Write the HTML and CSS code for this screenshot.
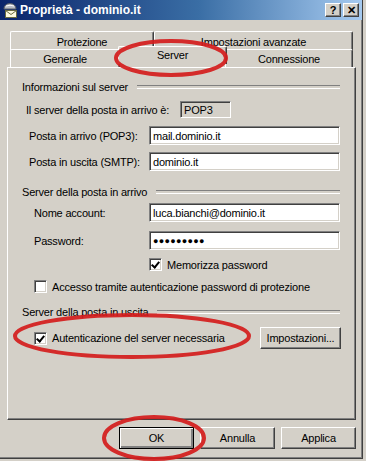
FILE: index.html
```html
<!DOCTYPE html>
<html lang="it">
<head>
  <meta charset="UTF-8" />
  <title>Proprietà - dominio.it</title>
  <link rel="stylesheet" href="styles.css">
</head>
<body>

  <div class="window">

    <!-- Title bar -->
    <div class="titlebar">
      <svg class="app-icon" width="16" height="16" viewBox="0 0 16 16">
        <path d="M2 7 Q2 2 8 1.5 Q14 2 14 7 Z" fill="#b8bcc4" stroke="#5a5e66" stroke-width="1"/>
        <path d="M4 4 Q8 2.5 12 4" fill="none" stroke="#fff" stroke-width="1"/>
        <rect x="3.5" y="8.5" width="11" height="7" fill="#fffbe0" stroke="#6b6b40" stroke-width="1"/>
        <path d="M3.5 8.5 L9 12.5 L14.5 8.5" fill="none" stroke="#6b6b40" stroke-width="1"/>
      </svg>
      <span class="title">Proprietà - dominio.it</span>
      <div class="title-buttons">
        <span class="tbtn">?</span>
        <span class="tbtn">✕</span>
      </div>
    </div>

    <!-- Tabs -->
    <div class="tabs">
      <div class="tab-row back">
        <div class="tab tab-prot">Protezione</div>
        <div class="tab tab-adv">Impostazioni avanzate</div>
      </div>
      <div class="tab-row front">
        <div class="tab tab-gen">Generale</div>
        <div class="tab tab-srv active">Server</div>
        <div class="tab tab-con">Connessione</div>
      </div>
    </div>

    <!-- Panel -->
    <div class="panel">
      <div class="group-title first"><span>Informazioni sul server</span></div>

      <div class="row row-type">
        <label class="lbl pad-27">Il server della posta in arrivo è:</label>
        <div class="readonly">POP3</div>
      </div>

      <div class="row row-in1">
        <label class="lbl pad-30">Posta in arrivo (POP3):</label>
        <div class="field">mail.dominio.it</div>
      </div>

      <div class="row row-in2">
        <label class="lbl pad-30">Posta in uscita (SMTP):</label>
        <div class="field">dominio.it</div>
      </div>

      <div class="group-title second"><span>Server della posta in arrivo</span></div>

      <div class="row row-acc">
        <label class="lbl pad-35">Nome account:</label>
        <div class="field">luca.bianchi@dominio.it</div>
      </div>

      <div class="row row-pwd">
        <label class="lbl pad-35">Password:</label>
        <div class="field dots">●●●●●●●●●</div>
      </div>

      <div class="row row-mem">
        <span class="check checked"></span>
        <span class="check-text">Memorizza password</span>
      </div>

      <div class="row row-spa">
        <span class="check"></span>
        <span class="check-text">Accesso tramite autenticazione password di protezione</span>
      </div>

      <div class="group-title third"><span>Server della posta in uscita</span></div>

      <div class="row row-auth">
        <span class="check checked"></span>
        <span class="check-text">Autenticazione del server necessaria</span>
        <span class="btn btn-settings">Impostazioni...</span>
      </div>
    </div>

    <!-- Dialog buttons -->
    <div class="actions">
      <span class="btn btn-main default">OK</span>
      <span class="btn btn-main">Annulla</span>
      <span class="btn btn-main">Applica</span>
    </div>

    <!-- Red marker rings drawn over the dialog -->
    <svg class="marks" width="366" height="461" viewBox="0 0 366 461">
      <ellipse cx="171" cy="58" rx="55" ry="17" />
      <ellipse cx="132" cy="336" rx="117" ry="21" />
      <ellipse cx="154" cy="438" rx="50" ry="21" />
    </svg>
  </div>

</body>
</html>
```

FILE: styles.css
```css
* {
  box-sizing: border-box;
  margin: 0;
  padding: 0;
}

body {
  width: 366px;
  height: 461px;
  background: #d4d0c8;
  font-family: 'Liberation Sans', Arial, sans-serif;
  font-size: 11px;
  letter-spacing: -0.2px;
  color: #000;
  overflow: hidden;
}

.window {
  position: relative;
  width: 363px;
  height: 459px;
  background: #d4d0c8;
  border-right: 1px solid #404040;
  border-bottom: 1px solid #404040;
  box-shadow: inset -1px -1px 0 #808080;
}

/* Title bar */
.titlebar {
  display: flex;
  align-items: center;
  height: 20px;
  width: 362px;
  padding-left: 2px;
  background: linear-gradient(to right, #0a246a, #3a6ea5 55%, #a6caf0);
}

.app-icon {
  flex: none;
}

.title {
  margin-left: 2px;
  color: #fff;
  font-weight: bold;
  font-size: 12px;
  letter-spacing: 0;
}

.title-buttons {
  display: flex;
  gap: 2px;
  margin-left: auto;
  margin-right: 3px;
}

.tbtn {
  display: flex;
  align-items: center;
  justify-content: center;
  width: 16px;
  height: 14px;
  background: #d4d0c8;
  border-top: 1px solid #fff;
  border-left: 1px solid #fff;
  border-right: 1px solid #404040;
  border-bottom: 1px solid #404040;
  box-shadow: inset -1px -1px 0 #808080;
  font-weight: bold;
  font-size: 11px;
  line-height: 1;
}

/* Tabs */
.tabs {
  margin-top: 11px;
  padding-left: 10px;
}

.tab-row {
  display: flex;
  height: 18px;
}

.tab {
  display: flex;
  align-items: center;
  justify-content: center;
  height: 19px;
  border-top: 1px solid #fff;
  border-left: 1px solid #fff;
  border-right: 1px solid #404040;
  box-shadow: inset -1px 0 0 #808080;
  border-radius: 2px 2px 0 0;
  background: #d4d0c8;
  padding-top: 1px;
}

.tab-prot { width: 144px; }
.tab-adv { width: 199px; }
.tab-gen { width: 110px; }
.tab-srv { width: 105px; }
.tab-con { width: 128px; }

.tab-row.front .tab {
  height: 18px;
}

.tab.active {
  position: relative;
  z-index: 2;
  height: 22px;
  margin: -3px -2px 0;
  width: 109px;
  padding-bottom: 3px;
}

/* Panel */
.panel {
  position: relative;
  z-index: 1;
  margin-left: 7px;
  width: 349px;
  height: 353px;
  border-top: 1px solid #fff;
  border-left: 1px solid #fff;
  border-right: 1px solid #404040;
  border-bottom: 1px solid #404040;
  box-shadow: inset -1px -1px 0 #808080;
  padding-left: 14px;
}

.group-title {
  display: flex;
  align-items: center;
  height: 14px;
  padding-right: 15px;
}

.group-title::after {
  content: "";
  flex: 1;
  height: 2px;
  margin-left: 9px;
  border-top: 1px solid #808080;
  border-bottom: 1px solid #fff;
}

.group-title.first { margin-top: 12px; }
.group-title.second { margin-top: 14px; }
.group-title.third { margin-top: 12px; }

.row {
  display: flex;
  align-items: center;
}

.lbl {
  width: 127px;
  flex: none;
  white-space: nowrap;
}

.pad-27 { padding-left: 4px; }
.pad-30 { padding-left: 7px; }
.pad-35 { padding-left: 12px; }

.field,
.readonly {
  display: flex;
  align-items: center;
  height: 19px;
  width: 191px;
  padding-left: 3px;
  background: #fff;
  border-top: 1px solid #808080;
  border-left: 1px solid #808080;
  border-right: 1px solid #fff;
  border-bottom: 1px solid #fff;
  box-shadow: inset 1px 1px 0 #404040, inset -1px -1px 0 #d4d0c8;
}

.readonly {
  width: 51px;
  height: 17px;
  margin-left: 31px;
  background: #d4d0c8;
}

.dots {
  font-size: 9px;
  letter-spacing: 0.3px;
}

.row-type { margin-top: 7px; }
.row-in1 { margin-top: 8px; }
.row-in2 { margin-top: 7px; }
.row-acc { margin-top: 4px; }
.row-pwd { margin-top: 9px; }

.row-mem {
  margin-top: 8px;
  padding-left: 127px;
  height: 13px;
}

.row-spa {
  margin-top: 9px;
  padding-left: 12px;
  height: 13px;
}

.row-auth {
  margin-top: 8px;
  padding-left: 12px;
  height: 22px;
}

.check {
  flex: none;
  position: relative;
  width: 13px;
  height: 13px;
  background: #fff;
  border-top: 1px solid #808080;
  border-left: 1px solid #808080;
  border-right: 1px solid #fff;
  border-bottom: 1px solid #fff;
  box-shadow: inset 1px 1px 0 #404040, inset -1px -1px 0 #d4d0c8;
}

.check.checked::after {
  content: "";
  position: absolute;
  left: 2px;
  top: 1px;
  width: 3px;
  height: 6px;
  border-right: 2px solid #000;
  border-bottom: 2px solid #000;
  transform: translate(1px, 0) rotate(40deg);
}

.check-text {
  margin-left: 5px;
  white-space: nowrap;
}

/* Buttons */
.btn {
  display: flex;
  align-items: center;
  justify-content: center;
  height: 22px;
  background: #d4d0c8;
  border-top: 1px solid #fff;
  border-left: 1px solid #fff;
  border-right: 1px solid #404040;
  border-bottom: 1px solid #404040;
  box-shadow: inset -1px -1px 0 #808080;
  white-space: nowrap;
}

.btn-settings {
  width: 81px;
  margin-left: auto;
  margin-right: 14px;
}

.actions {
  display: flex;
  gap: 6px;
  margin-top: 7px;
  padding-left: 119px;
}

.btn-main {
  width: 75px;
}

.btn.default {
  border: 1px solid #000;
  box-shadow: inset 1px 1px 0 #fff, inset -2px -2px 0 #808080, inset -1px -1px 0 #404040;
}

/* Red rings */
.marks {
  position: absolute;
  left: 0;
  top: 0;
  z-index: 5;
  pointer-events: none;
}

.marks ellipse {
  fill: none;
  stroke: #d41c1c;
  stroke-width: 4;
  opacity: 0.92;
}
```
